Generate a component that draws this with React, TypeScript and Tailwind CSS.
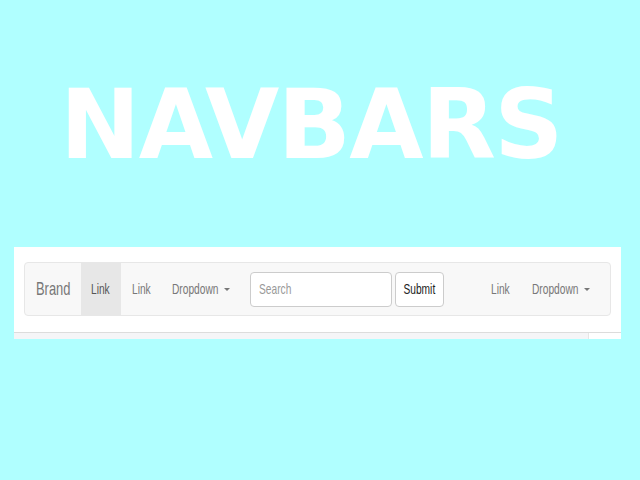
import type { ReactNode } from "react";

function T({ children, center = false }: { children: ReactNode; center?: boolean }) {
  return (
    <span
      className={
        center
          ? "inline-block origin-center scale-x-[0.68] whitespace-nowrap"
          : "inline-block origin-left scale-x-[0.68] whitespace-nowrap"
      }
    >
      {children}
    </span>
  );
}

function Caret() {
  return <span className="ml-[6px] h-0 w-0 border-x-[3px] border-t-[3px] border-x-transparent border-t-[#777]" />;
}

export default function App() {
  return (
    <div className="flex min-h-[480px] w-[640px] flex-col bg-[#b0ffff] font-['Liberation_Sans',Arial,sans-serif]">
      <h1 className="mt-[77px] h-[96px] w-[622px] text-center font-['DejaVu_Sans',sans-serif] text-[96px] font-bold leading-none tracking-[-1.6px] text-white">
        NAVBARS
      </h1>

      <div className="ml-[14px] mt-[74px] flex h-[92px] w-[607px] flex-col bg-white pt-[15px]">
        <nav className="mx-[10px] flex h-[54px] items-stretch rounded border border-[#e7e7e7] bg-[#f8f8f8] text-[15px] text-[#777]">
          <div className="flex w-[56px] items-center pl-[11px] text-[19px]">
            <T>Brand</T>
          </div>
          <div className="flex w-[40px] items-center bg-[#e7e7e7] pl-[10px] text-[#555]">
            <T>Link</T>
          </div>
          <div className="flex w-[40px] items-center pl-[11px]">
            <T>Link</T>
          </div>
          <div className="flex w-[79px] items-center pl-[11px]">
            <div className="w-[46px]">
              <T>Dropdown</T>
            </div>
            <Caret />
          </div>
          <form className="flex items-center pl-[10px]">
            <div className="flex h-[35px] w-[142px] items-center rounded border border-[#ccc] bg-white pl-[8px] text-[#999]">
              <T>Search</T>
            </div>
            <button
              type="button"
              className="ml-[3px] flex h-[35px] w-[49px] items-center justify-center rounded border border-[#ccc] bg-white text-[#222]"
            >
              <T center>Submit</T>
            </button>
          </form>
          <div className="flex-1" />
          <div className="flex w-[41px] items-center pl-[10px]">
            <T>Link</T>
          </div>
          <div className="flex w-[88px] items-center pl-[10px]">
            <div className="w-[46px]">
              <T>Dropdown</T>
            </div>
            <Caret />
          </div>
        </nav>

        <div className="mt-[16px] flex h-[7px] justify-end border-t border-[#dcdcdc] bg-[#f5f5f7]">
          <div className="w-[33px] border-l border-[#e6e6e6] bg-white" />
        </div>
      </div>
    </div>
  );
}
